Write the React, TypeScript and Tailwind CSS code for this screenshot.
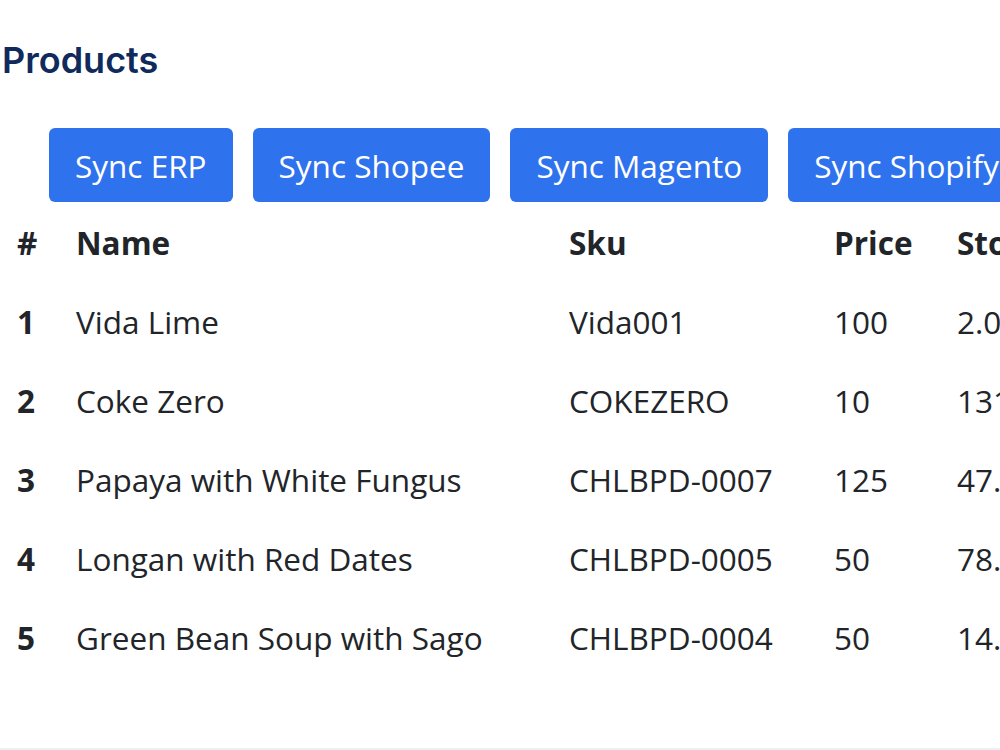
import React from 'react';

type Product = {
    id: number;
    name: string;
    sku: string;
    price: string;
    stock: string;
};

const products: Product[] = [
    { id: 1, name: 'Vida Lime', sku: 'Vida001', price: '100', stock: '2.00' },
    { id: 2, name: 'Coke Zero', sku: 'COKEZERO', price: '10', stock: '131.00' },
    { id: 3, name: 'Papaya with White Fungus', sku: 'CHLBPD-0007', price: '125', stock: '47.00' },
    { id: 4, name: 'Longan with Red Dates', sku: 'CHLBPD-0005', price: '50', stock: '78.00' },
    { id: 5, name: 'Green Bean Soup with Sago', sku: 'CHLBPD-0004', price: '50', stock: '14.00' },
];

const syncTargets = ['Sync ERP', 'Sync Shopee', 'Sync Magento', 'Sync Shopify'];

const App: React.FC = () => {
    return (
        <div className="w-[1000px] h-[750px] overflow-hidden bg-white flex flex-col font-['Open_Sans','Noto_Sans',sans-serif] text-[#212529]">
            <div className="flex-1 min-h-0">
                <h1 className="mt-[39px] pl-[2px] text-[36px] leading-[42px] font-semibold text-[#102a5c] font-['Inter','Lato',sans-serif]">
                    Products
                </h1>

                <div className="mt-[47px] ml-[49px] flex gap-[20px] whitespace-nowrap">
                    {syncTargets.map((label) => (
                        <button
                            key={label}
                            className="h-[74px] px-[26px] shrink-0 rounded-[6px] bg-[#2f72ee] text-white text-[31.5px] leading-[45px]"
                        >
                            {label}
                        </button>
                    ))}
                </div>

                <table className="mt-[1px] table-fixed w-[1200px] border-collapse text-left text-[31.5px] leading-[45px]">
                    <colgroup>
                        <col className="w-[59px]" />
                        <col className="w-[493px]" />
                        <col className="w-[265px]" />
                        <col className="w-[123px]" />
                        <col className="w-[260px]" />
                    </colgroup>
                    <thead>
                        <tr className="font-bold">
                            <th className="py-[17px] px-[17px]">#</th>
                            <th className="py-[17px] px-[17px]">Name</th>
                            <th className="py-[17px] px-[17px]">Sku</th>
                            <th className="py-[17px] px-[17px]">Price</th>
                            <th className="py-[17px] px-[17px]">Stock</th>
                        </tr>
                    </thead>
                    <tbody>
                        {products.map((p) => (
                            <tr key={p.id}>
                                <td className="py-[17px] px-[17px] font-bold">{p.id}</td>
                                <td className="py-[17px] px-[17px] whitespace-nowrap">{p.name}</td>
                                <td className="py-[17px] px-[17px] whitespace-nowrap">{p.sku}</td>
                                <td className="py-[17px] px-[17px]">{p.price}</td>
                                <td className="py-[17px] px-[17px]">{p.stock}</td>
                            </tr>
                        ))}
                    </tbody>
                </table>
            </div>
            <div className="h-[2px] bg-[#eceff3]" />
        </div>
    );
};

export default App;
